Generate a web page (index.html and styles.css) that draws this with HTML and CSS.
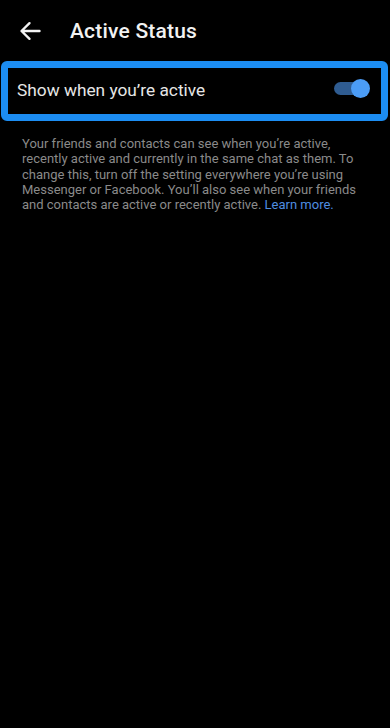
FILE: index.html
```html
<!DOCTYPE html>
<html>
<head>
<meta charset="utf-8">
<link rel="stylesheet" href="styles.css">
</head>
<body>
<div class="screen">
  <header class="topbar">
    <svg class="back" width="22" height="20" viewBox="0 0 22 20">
      <path d="M20.5 10H3M10.5 2.2L2.5 10l8 7.8" fill="none" stroke="#f2f2f2" stroke-width="2.4" stroke-linecap="round" stroke-linejoin="round"/>
    </svg>
    <h1 class="title">Active Status</h1>
  </header>
  <div class="setting">
    <span class="setting-label">Show when you’re active</span>
    <span class="toggle"><span class="knob"></span></span>
  </div>
  <p class="desc">Your friends and contacts can see when you’re active, recently active and currently in the same chat as them. To change this, turn off the setting everywhere you’re using Messenger or Facebook. You’ll also see when your friends and contacts are active or recently active. <span class="link">Learn more.</span></p>
</div>
</body>
</html>
```
FILE: styles.css
```css
html, body {
  margin: 0;
  padding: 0;
  background: #000;
}
.screen {
  width: 390px;
  height: 728px;
  background: #000;
  font-family: Roboto, "Noto Sans", sans-serif;
  overflow: hidden;
}
.topbar {
  display: flex;
  align-items: center;
  height: 40px;
  padding: 11px 0 0 19px;
  box-sizing: content-box;
}
.back {
  display: block;
}
.title {
  margin: 0 0 0 29px;
  font-size: 21px;
  font-weight: 500;
  color: #f2f2f2;
  letter-spacing: 0.2px;
}
.setting {
  margin: 10px 2px 0 1px;
  height: 60px;
  box-sizing: border-box;
  border: 7px solid #1c8df2;
  border-radius: 6px;
  display: flex;
  align-items: center;
  justify-content: space-between;
  padding: 0 18px 0 9px;
}
.setting-label {
  font-size: 17.3px;
  color: #e6e6e6;
  margin-top: -3px;
}
.toggle {
  position: relative;
  width: 29px;
  height: 13px;
  border-radius: 7px;
  background: #2f5c91;
  margin-top: -6px;
}
.knob {
  position: absolute;
  right: -7px;
  top: -3px;
  width: 19px;
  height: 19px;
  border-radius: 50%;
  background: #4b9cf6;
}
.desc {
  margin: 15px 30px 0 22px;
  font-size: 13px;
  line-height: 15.3px;
  color: #8a8a8a;
}
.link {
  color: #4f8ee0;
}
```
